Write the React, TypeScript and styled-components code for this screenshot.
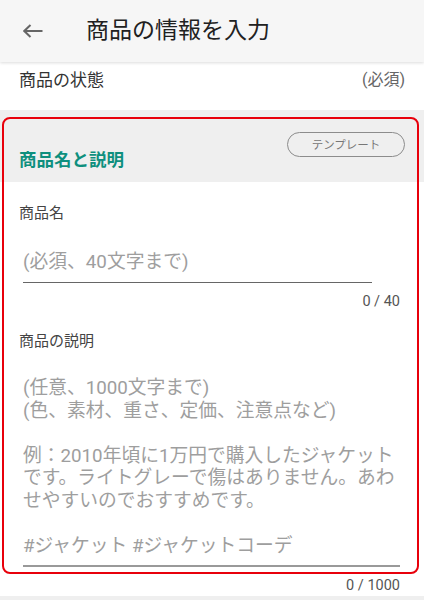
import styled, { createGlobalStyle } from "styled-components";

const GlobalStyle = createGlobalStyle`
  body {
    margin: 0;
    background: #ffffff;
    font-family: Roboto, "Noto Sans CJK JP", sans-serif;
    color: #333333;
  }
  * { box-sizing: border-box; }
`;

const Page = styled.div`
  width: 424px;
  min-height: 600px;
  background: #ffffff;
`;

const Header = styled.header`
  display: flex;
  align-items: center;
  height: 62px;
  padding-left: 23px;
  background: #f6f6f6;
  box-shadow: 0 1px 3px rgba(0, 0, 0, 0.14);
  position: relative;
  z-index: 1;
`;

const BackButton = styled.button`
  display: flex;
  align-items: center;
  padding: 0;
  border: none;
  background: none;
  width: 20px;
  height: 20px;
`;

const HeaderTitle = styled.h1`
  margin: 0 0 0 43px;
  font-size: 23px;
  font-weight: 400;
  color: #212121;
  line-height: 30px;
`;

const StatusRow = styled.div`
  display: flex;
  justify-content: space-between;
  align-items: flex-start;
  height: 48px;
  padding: 6px 19px 0;
  font-size: 17px;
  line-height: 24px;
`;

const Required = styled.span`
  font-size: 16px;
  color: #666666;
`;

const Section = styled.section`
  position: relative;
`;

const SectionHead = styled.div`
  display: flex;
  justify-content: space-between;
  align-items: flex-start;
  height: 72px;
  padding: 22px 19px 0;
  background: #efefef;
`;

const SectionTitle = styled.h2`
  margin: 16px 0 0;
  font-size: 17.5px;
  font-weight: 700;
  line-height: 24px;
  color: #0e8f7e;
`;

const TemplateButton = styled.button`
  width: 118px;
  height: 25px;
  border: 1px solid #8c8c8c;
  border-radius: 13px;
  background: transparent;
  font-family: inherit;
  font-size: 11.5px;
  color: #777777;
  padding: 0 0 2px;
`;

const SectionBody = styled.div`
  display: flex;
  flex-direction: column;
  padding: 20px 24px 0 19px;
`;

const FieldLabel = styled.label<{ $gap?: number }>`
  font-size: 15px;
  line-height: 22px;
  color: #444444;
  margin-top: ${(p) => p.$gap ?? 0}px;
`;

const TextInput = styled.input`
  width: 349px;
  margin: 24px 0 0 4px;
  padding: 0 0 6px;
  border: none;
  border-bottom: 1.3px solid #666666;
  background: none;
  font-family: inherit;
  font-size: 18.8px;
  line-height: 28px;
  height: 35px;
  outline: none;

  &::placeholder { color: #9e9e9e; }
`;

const Counter = styled.div`
  align-self: flex-end;
  margin-top: 9px;
  font-size: 14.5px;
  line-height: 20px;
  color: #555555;
`;

const TextArea = styled.textarea`
  width: 377px;
  height: 190px;
  margin: 25px 0 0 4px;
  padding: 0 0 8px;
  border: none;
  border-bottom: 2px solid #999999;
  background: none;
  font-family: inherit;
  font-size: 18.75px;
  line-height: 22.6px;
  resize: none;
  overflow: hidden;
  outline: none;

  &::placeholder { color: #9e9e9e; }
`;

const FooterBand = styled.div`
  margin-top: 0;
  height: 20px;
  background: #efefef;
`;

// red annotation frame drawn over the section
const Highlight = styled.div`
  position: absolute;
  top: 7px;
  left: 2px;
  width: 417px;
  height: 457px;
  border: 2px solid #e8000b;
  border-radius: 8px;
  pointer-events: none;
`;

const descPlaceholder =
  "(任意、1000文字まで)\n(色、素材、重さ、定価、注意点など)\n\n例：2010年頃に1万円で購入したジャケット\nです。ライトグレーで傷はありません。あわ\nせやすいのでおすすめです。\n\n#ジャケット #ジャケットコーデ";

export default function App() {
  return (
    <Page>
      <GlobalStyle />
      <Header>
        <BackButton aria-label="戻る">
          <svg width="20" height="14" viewBox="0 0 20 14" fill="none">
            <path d="M19.5 7H1.5M7.5 1L1.3 7l6.2 6" stroke="#666" strokeWidth="2" />
          </svg>
        </BackButton>
        <HeaderTitle>商品の情報を入力</HeaderTitle>
      </Header>

      <StatusRow>
        <span>商品の状態</span>
        <Required>(必須)</Required>
      </StatusRow>

      <Section>
        <SectionHead>
          <SectionTitle>商品名と説明</SectionTitle>
          <TemplateButton>テンプレート</TemplateButton>
        </SectionHead>
        <SectionBody>
          <FieldLabel htmlFor="name">商品名</FieldLabel>
          <TextInput id="name" placeholder="(必須、40文字まで)" />
          <Counter>0 / 40</Counter>
          <FieldLabel htmlFor="desc" $gap={18}>商品の説明</FieldLabel>
          <TextArea id="desc" wrap="off" placeholder={descPlaceholder} />
          <Counter>0 / 1000</Counter>
        </SectionBody>
        <Highlight />
      </Section>
      <FooterBand />
    </Page>
  );
}
